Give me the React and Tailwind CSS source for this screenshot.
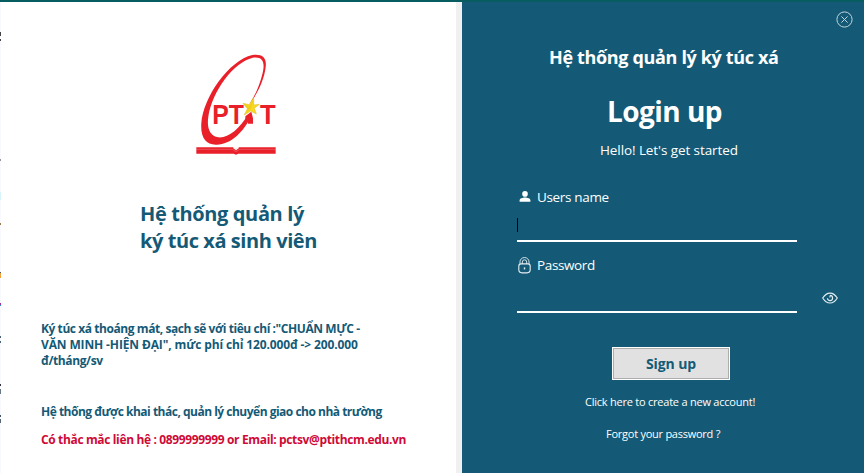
import React from "react";

const edgeMarks = [
  ["h-[30px]", "bg-transparent"],
  ["h-[4px]", "bg-[#444]"],
  ["h-[3px]", "bg-transparent"],
  ["h-[2px]", "bg-[#444]"],
  ["h-[118px]", "bg-transparent"],
  ["h-[2px]", "bg-[#999]"],
  ["h-[31px]", "bg-transparent"],
  ["h-[8px]", "bg-[#d8f4fa]"],
  ["h-[23px]", "bg-transparent"],
  ["h-[2px]", "bg-[#a07850]"],
  ["h-[47px]", "bg-transparent"],
  ["h-[1px]", "bg-[#555]"],
  ["h-[5px]", "bg-[#f0a03c]"],
  ["h-[25px]", "bg-transparent"],
  ["h-[2px]", "bg-[#a030a0]"],
  ["h-[1px]", "bg-[#30a0d0]"],
  ["h-[30px]", "bg-transparent"],
  ["h-[2px]", "bg-[#4c6478]"],
  ["h-[3px]", "bg-transparent"],
  ["h-[2px]", "bg-[#4c6478]"],
  ["h-[41px]", "bg-transparent"],
  ["h-[2px]", "bg-[#334]"],
  ["h-[3px]", "bg-transparent"],
  ["h-[5px]", "bg-[#667888]"],
  ["h-[21px]", "bg-transparent"],
  ["h-[2px]", "bg-[#456]"],
  ["h-[2px]", "bg-transparent"],
  ["h-[4px]", "bg-[#567]"],
];

function Logo() {
  return (
    <svg className="h-[120px] w-[110px] shrink-0" viewBox="0 0 330 360">
      <path
        fill="#e9202a"
        d="M257 66C261 38 247 26 217 30C148 45 69 157 64 235C61 276 77 299 107 299C151 301 190 262 216 211L205 208C178 253 144 280 115 277C89 273 80 249 85 215C97 137 161 52 218 38C250 33 256 54 247 88C240 117 227 149 207 180C232 147 253 104 257 66Z"
      />
      <g fill="#e9202a" fontFamily="'Liberation Sans', Arial, sans-serif" fontWeight="700">
        <text x="97" y="236" fontSize="83" textLength="95" lengthAdjust="spacingAndGlyphs">PT</text>
        <text x="240" y="236" fontSize="83" textLength="47" lengthAdjust="spacingAndGlyphs">T</text>
      </g>
      <path fill="#e9202a" d="M196 214L214 200L219 220V236H204V221L196 230Z" />
      <path fill="#f8da22" stroke="#e3b31c" strokeWidth="1.5" d="M221 157L221 180L238 178L223 190L229 207L212 198L193 210L202 191L189 175L208 179Z" />
      <path fill="#d0a010" d="M220 162L214 190L198 206L204 191L193 178L209 183Z" opacity=".2" />
      <path fill="#e9202a" d="M49 307H160L168 313L176 307H287V326H175L168 329L161 326H49Z" />
      <path fill="none" stroke="#fff" strokeWidth="1.5" opacity=".4" d="M49 313H157L168 320L179 313H287" />
      <path fill="#fff" d="M159 306L168 312L177 306V309L168 316L159 309Z" />
    </svg>
  );
}

function UserIcon() {
  return (
    <svg className="h-[12px] w-[12px]" viewBox="0 0 12 12" fill="#fff">
      <circle cx="6" cy="2.9" r="2.8" />
      <path d="M.6 10.8V9.4C.6 7.5 3.5 6.6 6 6.6S11.4 7.5 11.4 9.4V10.8Z" />
    </svg>
  );
}

function LockIcon() {
  return (
    <svg className="h-[17px] w-[13px]" viewBox="0 0 13 17" fill="none" stroke="#e6eef2">
      <path d="M2 7V4.8A4.5 4.3 0 0 1 11 4.8V7M4.3 7V5A2.2 2.2 0 0 1 8.7 5V7" strokeWidth=".9" />
      <path d="M3 6.9H10Q12.2 6.9 12.2 9.2V12.6Q12.2 15.9 9 15.9H4Q.8 15.9 .8 12.6V9.2Q.8 6.9 3 6.9Z" strokeWidth="1.1" />
      <path d="M6.5 10.4V12.4" strokeWidth="1.4" />
    </svg>
  );
}

function EyeIcon() {
  return (
    <svg className="h-[12px] w-[16px]" viewBox="0 0 16 12" fill="none" stroke="#e4edf1" strokeWidth="1.15">
      <path d="M.7 6C4.8-.6 11.2-.6 15.3 6C11.2 12.6 4.8 12.6.7 6Z" />
      <path d="M8 3.4A2.6 2.6 0 1 1 5.4 6.3M8 3.4V5.5" />
    </svg>
  );
}

function CloseIcon() {
  return (
    <svg className="h-[17px] w-[17px]" viewBox="0 0 17 17" fill="none" stroke="#c3d5dd">
      <circle cx="8.5" cy="8.5" r="7.6" />
      <path d="M5.4 5.4L11.6 11.6M11.6 5.4L5.4 11.6" />
    </svg>
  );
}

export default function App() {
  return (
    <div className="flex h-[473px] w-[864px] flex-col overflow-hidden whitespace-nowrap bg-white font-['Open_Sans','Noto_Sans',sans-serif]">
      <div className="h-[2px] shrink-0 bg-[#075c60]" />
      <div className="flex min-h-0 flex-1">
        <div className="flex w-px shrink-0 flex-col bg-[#f8f8ff]">
          {edgeMarks.map(([height, color], i) => (
            <div key={i} className={`${height} ${color} shrink-0`} />
          ))}
        </div>
        <section className="flex w-[455px] shrink-0 flex-col text-[#145a76]">
          <div className="mt-[43px] pl-[179px]">
            <Logo />
          </div>
          <h1 className="mt-[35px] pl-[139px] text-[20px] leading-[27px] font-bold">
            <span className="block tracking-[-0.37px]">Hệ thống quản lý</span>
            <span className="block tracking-[-0.43px]">ký túc xá sinh viên</span>
          </h1>
          <p className="mt-[67px] pl-[40px] text-[12px] leading-[16px] font-bold">
            <span className="block tracking-[-0.43px]">Ký túc xá thoáng mát, sạch sẽ với tiêu chí :"CHUẨN MỰC -</span>
            <span className="block tracking-[-0.13px]">VĂN MINH -HIỆN ĐẠI", mức phí chỉ 120.000đ -&gt; 200.000</span>
            <span className="block tracking-[-0.38px]">đ/tháng/sv</span>
          </p>
          <p className="mt-[35px] pl-[40px] text-[12px] leading-[16px] font-bold tracking-[-0.5px]">
            Hệ thống được khai thác, quản lý chuyển giao cho nhà trường
          </p>
          <p className="mt-[12px] pl-[40px] text-[12px] leading-[16px] font-bold tracking-[-0.36px] text-[#cf0a36]">
            Có thắc mắc liên hệ : 0899999999 or Email: pctsv@ptithcm.edu.vn
          </p>
        </section>
        <div className="w-[6px] shrink-0 bg-[#f0f0f0]" />
        <main className="flex w-[402px] shrink-0 flex-col bg-[#145a76] text-white">
          <button className="mt-[9px] mr-[11px] self-end" aria-label="Close">
            <CloseIcon />
          </button>
          <h2 className="mt-[17px] pl-[87px] text-[18px] leading-[24px] font-bold tracking-[-0.34px]">Hệ thống quản lý ký túc xá</h2>
          <h3 className="mt-[22px] pl-[145px] text-[28px] leading-[40px] font-bold tracking-[-0.55px]">Login up</h3>
          <p className="mt-[9px] pl-[138px] text-[13.5px] leading-[20px] tracking-[-0.09px]">Hello! Let's get started</p>
          <label className="mt-[27px] flex h-[20px] items-center gap-[6px] pl-[57px] text-[13.5px] leading-[20px] tracking-[-0.33px]">
            <UserIcon />
            <span>Users name</span>
          </label>
          <div className="mt-[11px] ml-[55px] h-[24px] w-[280px] border-b-2 border-white">
            <div className="h-[14px] w-px bg-black" />
          </div>
          <label className="mt-[13px] flex h-[20px] items-center gap-[6px] pl-[56px] text-[13.5px] leading-[20px] tracking-[-0.37px]">
            <LockIcon />
            <span>Password</span>
          </label>
          <div className="flex h-[38px] items-end pl-[55px]">
            <div className="h-[20px] w-[280px] border-b-2 border-white" />
            <span className="mb-[9px] ml-[25px]">
              <EyeIcon />
            </span>
          </div>
          <button className="mt-[34px] ml-[150px] h-[33px] w-[118px] border border-white bg-[#e1e1e1] text-[14px] font-bold text-[#145a76]">
            <span className="flex h-full items-center justify-center border border-[#adadad] tracking-[-0.1px]">Sign up</span>
          </button>
          <a className="mt-[14px] pl-[123px] text-[11px] leading-[16px] tracking-[-0.23px]">Click here to create a new account!</a>
          <a className="mt-[16px] pl-[144px] text-[11px] leading-[16px] tracking-[-0.25px]">Forgot your password ?</a>
        </main>
      </div>
    </div>
  );
}
